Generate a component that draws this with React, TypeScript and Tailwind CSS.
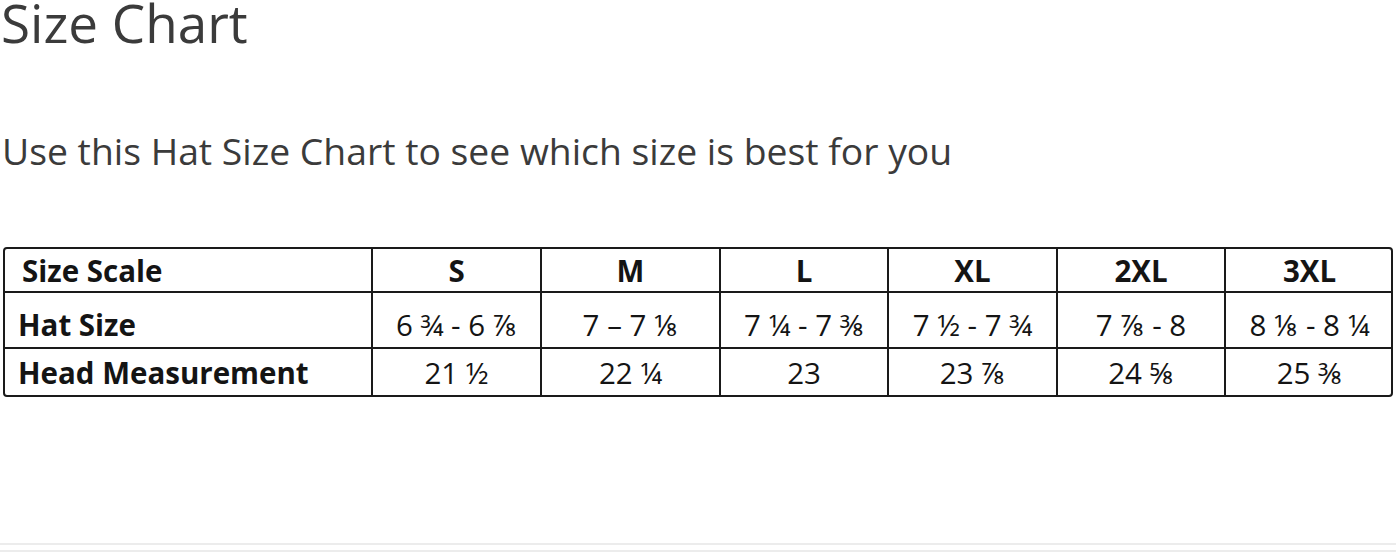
const header = ['S', 'M', 'L', 'XL', '2XL', '3XL'];

const rows = [
  { label: 'Hat Size', values: ['6 ¾ - 6 ⅞', '7 – 7 ⅛', '7 ¼ - 7 ⅜', '7 ½ - 7 ¾', '7 ⅞ - 8', '8 ⅛ - 8 ¼'], h: 'h-[56px] [&>td]:pt-[8px]' },
  { label: 'Head Measurement', values: ['21 ½', '22 ¼', '23', '23 ⅞', '24 ⅝', '25 ⅜'], h: 'h-[47px]' },
];

const colWidths = ['w-[367px]', 'w-[169px]', 'w-[179px]', 'w-[168px]', 'w-[169px]', 'w-[168px]', 'w-[168px]'];

export default function App() {
  return (
    <div className="w-[1396px] h-[556px] bg-white overflow-hidden font-['Open_Sans',sans-serif] flex flex-col">
      <h1 className="text-[53px] leading-[45px] text-[#3b3b3b] pl-[1px]">Size Chart</h1>

      <p className="mt-[87px] text-[37.3px] leading-none text-[#3b3b3b] pl-[2px]">
        Use this Hat Size Chart to see which size is best for you
      </p>

      <div className="mt-[78px] ml-[3px] w-[1390px] border-2 border-[#1a1a1a] rounded-[4px] overflow-hidden">
        <table className="w-full table-fixed border-collapse text-[#141414] text-[29.5px] leading-none">
          <colgroup>
            {colWidths.map((w, i) => (
              <col key={i} className={w} />
            ))}
          </colgroup>
          <thead>
            <tr className="h-[43px]">
              <th className="text-left font-bold pl-[17px]">Size Scale</th>
              {header.map((s) => (
                <th key={s} className="font-bold text-center border-l-2 border-[#1a1a1a]">
                  {s}
                </th>
              ))}
            </tr>
          </thead>
          <tbody>
            {rows.map((r) => (
              <tr key={r.label} className={`${r.h} border-t-2 border-[#1a1a1a]`}>
                <td className="text-left font-bold pl-[13px]">{r.label}</td>
                {r.values.map((v, i) => (
                  <td key={i} className="text-center border-l-2 border-[#1a1a1a]">
                    {v}
                  </td>
                ))}
              </tr>
            ))}
          </tbody>
        </table>
      </div>

      <div className="mt-auto mb-[4px] flex flex-col gap-[5px]">
        <div className="h-[2px] bg-[#ececec]" />
        <div className="h-[2px] bg-[#ececec]" />
      </div>
    </div>
  );
}
